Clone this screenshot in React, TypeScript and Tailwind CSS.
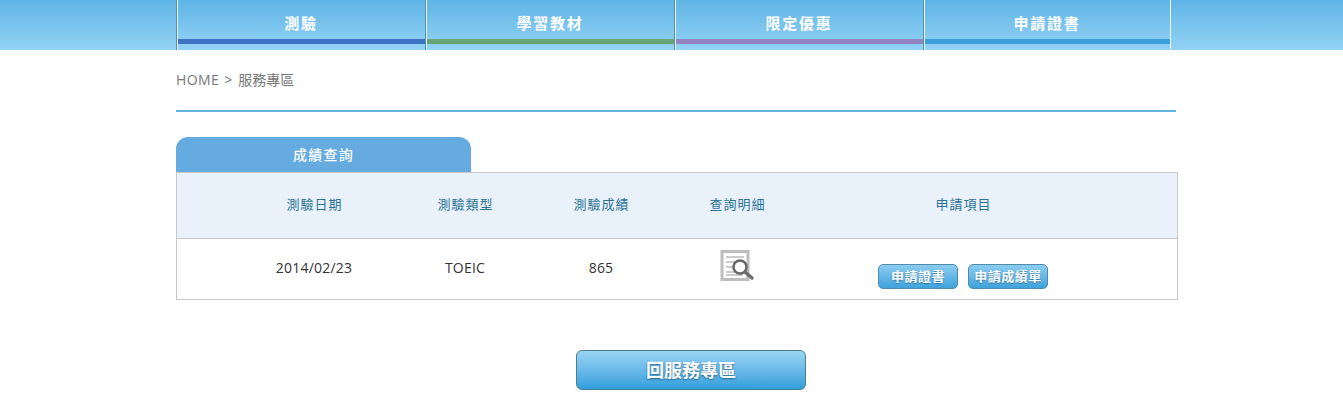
const font = "font-['Open_Sans','Noto_Sans_CJK_TC',sans-serif]";

const navItems = [
  { label: "測驗", bar: "bg-[#3d73c4]" },
  { label: "學習教材", bar: "bg-[#66a57c]" },
  { label: "限定優惠", bar: "bg-[#9184c0]" },
  { label: "申請證書", bar: "bg-[#3c9fda]" },
];

const columns = "grid grid-cols-[166px_136px_136px_136px_316px] pl-[54px]";

function DetailIcon() {
  return (
    <svg width="36" height="34" viewBox="0 0 36 34" fill="none">
      <rect x="3" y="2.5" width="26" height="28" fill="#fff" stroke="#bdbdbd" strokeWidth="3" />
      <path d="M7 8h18M7 13h10M7 18h8M7 23h10M7 26h17" stroke="#bcbcbc" strokeWidth="1.5" />
      <circle cx="21" cy="18" r="6.5" fill="#fff" fillOpacity="0.7" stroke="#666" strokeWidth="2.5" />
      <path d="M26 23l7 6" stroke="#6c6c6c" strokeWidth="3.5" strokeLinecap="round" />
    </svg>
  );
}

function SmallButton({ label, className }: { label: string; className: string }) {
  return (
    <button
      className={`h-[25px] rounded-[5px] border border-[#4f8bab] bg-gradient-to-b from-[#8accf0] to-[#3fa3dc] text-[13px] font-bold leading-none tracking-[0.5px] text-white [text-shadow:0_1px_1px_rgba(0,60,100,0.5)] ${className}`}
    >
      {label}
    </button>
  );
}

export default function App() {
  return (
    <div className={`h-[406px] overflow-hidden bg-white ${font}`}>
      <nav className="flex h-[50px] bg-gradient-to-b from-[#5fb4e6] to-[#93d3f4] pl-[176px]">
        {navItems.map((item) => (
          <div
            key={item.label}
            className="flex h-full w-[249px] flex-col border-l border-[#4f8fae] shadow-[inset_1px_0_0_#eef7fc] last:w-[248px] last:border-r last:border-r-[#eef7fc]"
          >
            <div className="flex h-[39px] items-center justify-center pt-[7px] text-[15px] font-bold tracking-[1.7px] text-white">
              {item.label}
            </div>
            <div className={`ml-px h-[5px] ${item.bar}`} />
          </div>
        ))}
      </nav>

      <main className="ml-[176px] w-[1002px]">
        <div className="flex h-[62px] w-[1000px] items-center border-b-2 border-[#62b5e0] pb-[1px] text-[14px] text-[#777]">
          <span className="tracking-[0.4px]">HOME</span>
          <span className="ml-[5px]">&gt;</span>
          <span className="ml-[6px]">服務專區</span>
        </div>

        <div className="mt-[25px] flex h-[35px] w-[295px] items-center justify-center rounded-t-[12px] bg-[#65abe0] pb-[1px] text-[14px] font-medium tracking-[1.3px] text-white">
          成績查詢
        </div>

        <div className="border border-[#c9c9c9]">
          <div className={`${columns} h-[66px] items-center border-b border-[#c9c9c9] bg-[#e9f1fa] pb-[2px] text-center text-[13px] tracking-[1px] text-[#2a7396]`}>
            <div className="pl-px">測驗日期</div>
            <div className="pl-px">測驗類型</div>
            <div className="pl-px">測驗成績</div>
            <div className="pl-px">查詢明細</div>
            <div className="pl-px">申請項目</div>
          </div>

          <div className={`${columns} h-[60px] items-center text-center text-[14px] tracking-[0.2px] text-[#333]`}>
            <div className="pb-[4px]">2014/02/23</div>
            <div className="pb-[4px]">TOEIC</div>
            <div className="pb-[4px]">865</div>
            <div className="flex justify-center pb-[6px]">
              <DetailIcon />
            </div>
            <div className="flex justify-center gap-[10px] pt-[14px]">
              <SmallButton label="申請證書" className="w-[80px]" />
              <SmallButton label="申請成績單" className="w-[80px]" />
            </div>
          </div>
        </div>

        <div className="mt-[50px] flex pl-[400px]">
          <button className="h-[40px] w-[230px] rounded-[6px] border border-[#4a7f8c] bg-gradient-to-b from-[#9ad4f4] to-[#2f9fdc] text-[18px] font-bold text-white [text-shadow:0_1px_2px_rgba(0,50,90,0.6)]">
            回服務專區
          </button>
        </div>
      </main>
    </div>
  );
}
